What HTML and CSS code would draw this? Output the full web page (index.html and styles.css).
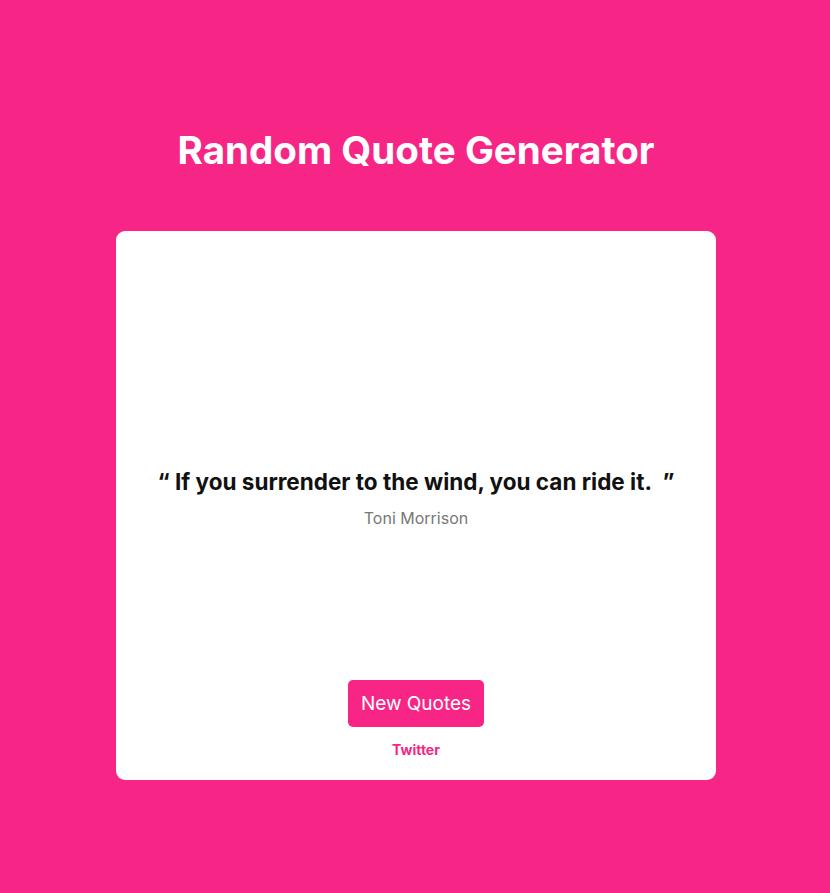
FILE: index.html
```html
<!DOCTYPE html>
<html lang="en">
<head>
<meta charset="utf-8">
<title>Random Quote Generator</title>
<link rel="stylesheet" href="styles.css">
</head>
<body>
<main class="page">
  <h1 class="title">Random Quote Generator</h1>
  <section class="card">
    <div class="quote-area">
      <p class="quote">“ If you surrender to the wind, you can ride it.&nbsp; ”</p>
      <p class="author">Toni Morrison</p>
    </div>
    <div class="actions">
      <button class="btn">New Quotes</button>
      <a class="twitter" href="#">Twitter</a>
    </div>
  </section>
</main>
</body>
</html>
```
FILE: styles.css
```css
* { box-sizing: border-box; }
html, body { margin: 0; padding: 0; }
body {
  background: #f72585;
  font-family: "Inter", "Lato", sans-serif;
  min-height: 893px;
}
.page {
  display: flex;
  flex-direction: column;
  align-items: center;
  padding-top: 124px;
  padding-left: 2px;
}
.title {
  margin: 0;
  color: #fff;
  font-size: 38.6px;
  font-weight: 700;
  line-height: 52px;
}
.card {
  margin-top: 55px;
  width: 600px;
  height: 549px;
  background: #fff;
  border-radius: 9px;
  display: flex;
  flex-direction: column;
  align-items: center;
  padding-bottom: 22px;
}
.quote-area {
  flex: 1;
  display: flex;
  flex-direction: column;
  align-items: center;
  justify-content: center;
  padding-top: 84px;
}
.quote {
  margin: 0;
  font-size: 22.5px;
  font-weight: 700;
  letter-spacing: 0;
  color: #111;
}
.author {
  margin: 13px 0 0;
  font-size: 16px;
  color: #777;
}
.actions {
  display: flex;
  flex-direction: column;
  align-items: center;
  gap: 14px;
}
.btn {
  width: 136px;
  height: 47px;
  border: none;
  border-radius: 5px;
  background: #f72585;
  color: #fff;
  font-family: inherit;
  font-size: 19px;
  cursor: pointer;
}
.twitter {
  color: #f72585;
  font-family: "Inter", "Lato", sans-serif;
  font-size: 14px;
  font-weight: 700;
  text-decoration: none;
}
```
